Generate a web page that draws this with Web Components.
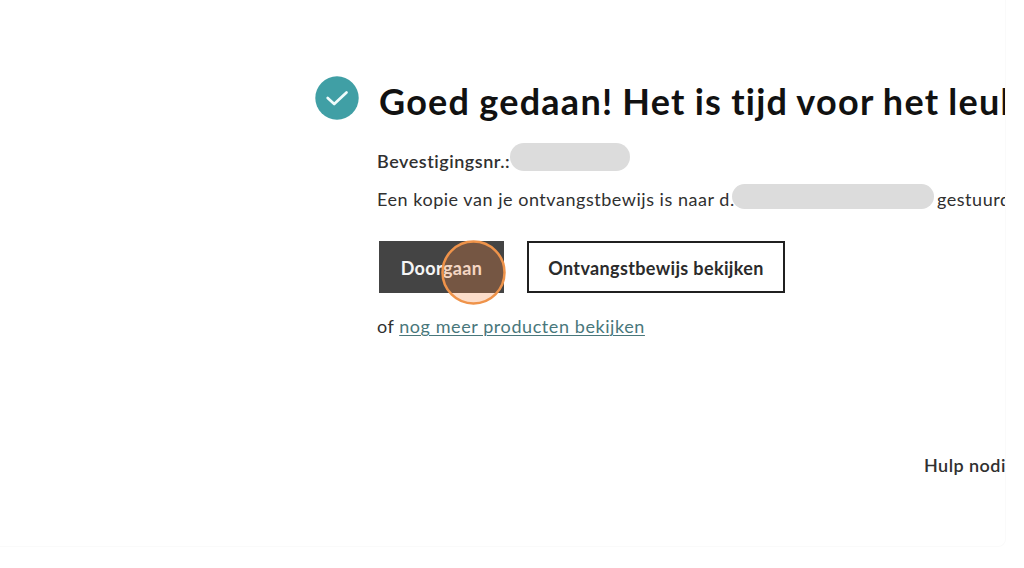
<!DOCTYPE html>
<html lang="nl">
<head>
<meta charset="utf-8">
<title>Bevestiging</title>
<style>
  body {
    margin: 0;
    background: #fff;
    font-family: Lato, "Liberation Sans", sans-serif;
  }
</style>
</head>
<body>
<order-confirmation></order-confirmation>
<script>
class StatusCheck extends HTMLElement {
  constructor() {
    super();
    this.attachShadow({ mode: "open" });
  }

  connectedCallback() {
    this.shadowRoot.innerHTML = /* html */`
    <style>
      :host { display: block; width: 44px; height: 44px; }
      svg { display: block; }
    </style>
    <svg width="44" height="44" viewBox="0 0 44 44">
      <circle cx="22" cy="22" r="21.7" fill="#409fa5"/>
      <path d="M12.7 22 19.2 28 31.5 16.5" fill="none" stroke="#effbfb" stroke-width="2.7" stroke-linecap="round" stroke-linejoin="round"/>
    </svg>`;
  }
}

class RedactedText extends HTMLElement {
  constructor() {
    super();
    this.attachShadow({ mode: "open" });
  }

  connectedCallback() {
    this.shadowRoot.innerHTML = /* html */`
    <style>
      :host {
        display: block;
        flex: none;
        border-radius: 14px;
        background: #dcdcdc;
      }
    </style>`;
  }
}

class ActionButton extends HTMLElement {
  constructor() {
    super();
    this.attachShadow({ mode: "open" });
  }

  connectedCallback() {
    this.shadowRoot.innerHTML = /* html */`
    <style>
      :host { display: block; height: 52px; }
      button {
        width: 100%;
        height: 100%;
        padding: 1px 0 0;
        border: 2px solid #202020;
        background: #fff;
        color: #2b2b2b;
        font: inherit;
        letter-spacing: inherit;
        white-space: nowrap;
      }
      :host([primary]) button {
        border-color: #444;
        background: #444;
        color: #f5f5f5;
      }
    </style>
    <button><slot></slot></button>`;
  }
}

class ClickMarker extends HTMLElement {
  constructor() {
    super();
    this.attachShadow({ mode: "open" });
  }

  connectedCallback() {
    this.shadowRoot.innerHTML = /* html */`
    <style>
      :host {
        display: block;
        width: 65px;
        height: 65px;
      }
      svg { display: block; }
    </style>
    <svg width="65" height="65" viewBox="0 0 65 65">
      <circle cx="32.5" cy="32.5" r="31" fill="#f3863f" fill-opacity=".28" stroke="#ef934a" stroke-width="2.5"/>
    </svg>`;
  }
}

class OrderConfirmation extends HTMLElement {
  constructor() {
    super();
    this.attachShadow({ mode: "open" });
  }

  static get styles() {
    return /* css */`
      :host {
        display: grid;
        grid-template-columns: 377px 1fr;
        grid-template-rows: 412px 1fr;
        box-sizing: border-box;
        width: 1006px;
        height: 547px;
        overflow: hidden;
        border: solid #fafafa;
        border-width: 0 1px 1px 0;
        border-bottom-right-radius: 8px;
        color: #303030;
        font-size: 18px;
        line-height: 24px;
        letter-spacing: .53px;
        white-space: nowrap;
      }

      status-check {
        justify-self: end;
        margin: 76px 18px 0 0;
      }

      .content {
        min-width: 0;
        padding-top: 77px;
      }

      h1 {
        margin: 0 0 18px 2px;
        color: #111;
        font-size: 36px;
        font-weight: 700;
        line-height: 48px;
        letter-spacing: 1.25px;
        word-spacing: -1px;
      }

      .row {
        display: flex;
        height: 28px;
      }

      .number { font-weight: 600; }
      .number span { width: 133px; padding-top: 6px; }
      .number redacted-text { width: 120px; height: 28px; }

      .receipt { margin-top: 13px; }
      .receipt span { width: 355px; padding-top: 3px; }
      .receipt redacted-text { width: 202px; height: 25px; }
      .receipt .end { width: auto; margin-left: 3px; }

      .actions {
        display: flex;
        gap: 23px;
        position: relative;
        margin: 29px 0 0 2px;
        font-weight: 700;
        letter-spacing: .36px;
      }

      .continue { width: 125px; }
      .view { width: 258px; }

      click-marker {
        position: absolute;
        left: 62px;
        top: -1px;
      }

      p { margin: 21px 0 0; }
      a { color: #49777b; letter-spacing: .58px; text-underline-offset: 2px; text-decoration-thickness: 1px; }

      .help {
        grid-column: 2;
        margin: 41px 0 0 547px;
        font-weight: 600;
        letter-spacing: .45px;
      }
    `;
  }

  connectedCallback() {
    this.render();
  }

  render() {
    this.shadowRoot.innerHTML = /* html */`
    <style>${OrderConfirmation.styles}</style>
    <status-check></status-check>
    <div class="content">
      <h1>Goed gedaan! Het is tijd voor het leuk</h1>
      <div class="row number">
        <span>Bevestigingsnr.:</span>
        <redacted-text></redacted-text>
      </div>
      <div class="row receipt">
        <span>Een kopie van je ontvangstbewijs is naar d.</span>
        <redacted-text></redacted-text>
        <span class="end">gestuurd</span>
      </div>
      <div class="actions">
        <action-button class="continue" primary>Doorgaan</action-button>
        <action-button class="view">Ontvangstbewijs bekijken</action-button>
        <click-marker></click-marker>
      </div>
      <p>of <a href="#">nog meer producten bekijken</a></p>
    </div>
    <div class="help">Hulp nodi</div>`;
  }
}

customElements.define("status-check", StatusCheck);
customElements.define("redacted-text", RedactedText);
customElements.define("action-button", ActionButton);
customElements.define("click-marker", ClickMarker);
customElements.define("order-confirmation", OrderConfirmation);
</script>
</body>
</html>
